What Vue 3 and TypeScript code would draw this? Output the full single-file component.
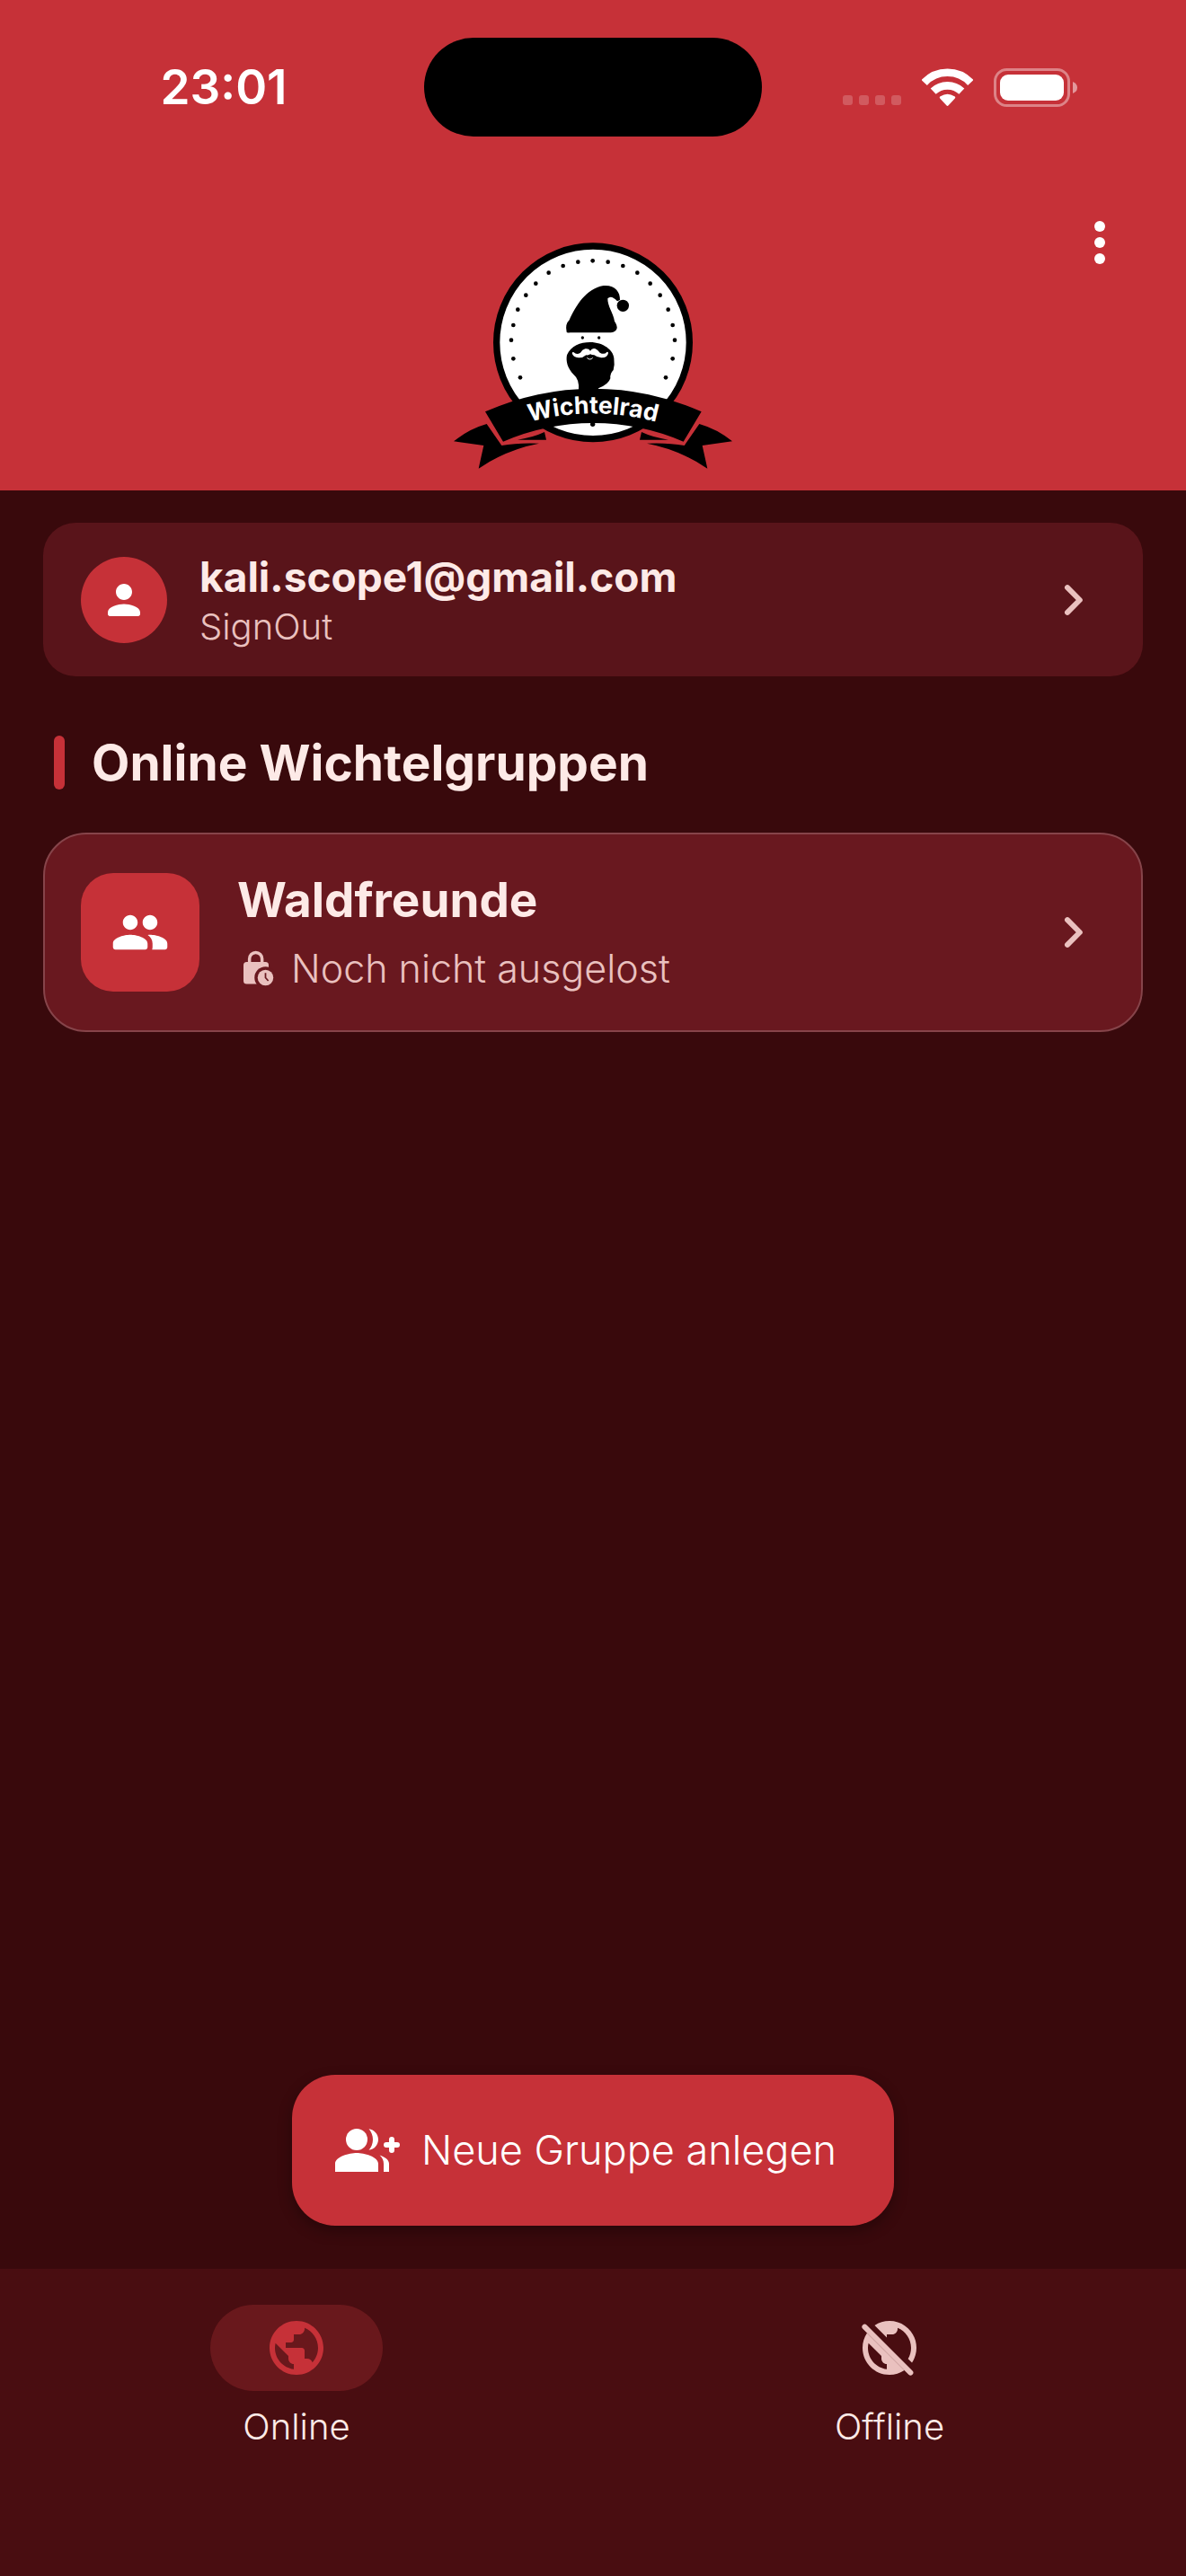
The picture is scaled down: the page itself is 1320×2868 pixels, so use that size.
<script setup lang="ts">
import { ref } from 'vue'

type Tab = 'online' | 'offline'

interface Group {
  id: number
  name: string
  status: string
}

const tab = ref<Tab>('online')
const account = { email: 'kali.scope1@gmail.com', action: 'SignOut' }
const groups: Group[] = [{ id: 1, name: 'Waldfreunde', status: 'Noch nicht ausgelost' }]

// Ring of dots inside the badge, left half; the right half is mirrored around x = 510
const ringDots: [number, number][] = [
  [460, 125], [410, 138], [362, 161], [319, 197], [286, 236],
  [259, 284], [244, 336], [237, 386], [244, 448], [267, 511],
]
</script>

<template>
  <div class="app">
    <header class="header">
      <div class="status">
        <time class="clock">23:01</time>
        <div class="island"></div>
        <div class="signals">
          <svg class="cell" viewBox="0 0 65 11" aria-hidden="true">
            <rect v-for="n in 4" :key="n" :x="(n - 1) * 18" y="0" width="11" height="11" rx="3" />
          </svg>
          <svg class="wifi" viewBox="0 0 171 126" aria-hidden="true">
            <g fill="none" stroke="#fff" stroke-width="26">
              <path d="M8 48A106 106 0 0 1 163 48" />
              <path d="M38 77A69 69 0 0 1 133 77" />
            </g>
            <path fill="#fff" d="M61 101Q57 97 62 94Q85.500 79 109 94Q114 97 110 101L89 124Q85.500 128 82 124Z" />
          </svg>
          <svg class="battery" viewBox="0 0 93 43" aria-hidden="true">
            <rect x="1.500" y="1.500" width="82" height="40" rx="13" fill="none" stroke="#fff" stroke-opacity=".4" stroke-width="3" />
            <rect x="7" y="7" width="71" height="29" rx="9" fill="#fff" />
            <path d="M88 15Q93 17 93 21.500Q93 26 88 28Z" fill="#fff" fill-opacity=".5" />
          </svg>
        </div>
      </div>

      <div class="toolbar">
        <svg class="logo" viewBox="0 0 1020 870" role="img" aria-label="Wichtelrad">
          <defs>
            <path id="banner-line" d="M260 671A800 800 0 0 1 760 671" />
            <g id="ribbon-end">
              <path d="M45 724Q95 683 155 666L205 738Q260 728 330 731Q220 752 128 815L145 738Z" />
              <path d="M348 693L354 719H258Q310 711 348 693Z" />
            </g>
          </defs>
          <circle cx="510" cy="394" r="322" fill="#fff" stroke="#000" stroke-width="22" />
          <g v-for="[x, y] in ringDots" :key="x + '-' + y">
            <circle :cx="x" :cy="y" r="7" />
            <circle :cx="1020 - x" :cy="y" r="7" />
          </g>
          <circle cx="509" cy="121" r="7" />
          <circle cx="509" cy="667" r="8" />
          <path d="M422 359Q416 333 431 319C452 272 486 214 545 204C583 201 601 224 600 252L591 256Q571 234 559 247C558 272 577 294 582 323Q603 354 570 361H434Q422 362 422 359Z" />
          <circle cx="610" cy="271" r="20" />
          <circle cx="475" cy="378" r="5" />
          <circle cx="530" cy="378" r="5" />
          <path d="M500 393C545 393 578 420 580 446Q583 468 578 486Q566 498 568 514Q562 534 528 547V556H462Q466 518 446 502C424 480 419 455 423 436C436 405 468 393 500 393Z" />
          <path fill="#fff" d="M501 422Q506 412 518 415Q526 419 533 428Q548 436 556 426Q560 424 561 429Q559 445 538 445Q524 444 514 436Q506 436 501 433Q496 437 487 436Q476 446 462 445Q443 444 440 429Q442 425 446 427Q455 436 468 428Q474 418 484 415Q496 413 501 422Z" />
          <path fill="none" stroke="#fff" stroke-width="3" d="M490 445Q500 455 509 445" />
          <path d="M150 625A884 884 0 0 1 872 625L812 725A761 761 0 0 0 210 725Z" />
          <use href="#ribbon-end" />
          <use href="#ribbon-end" transform="matrix(-1 0 0 1 1020 0)" />
          <text class="banner-text"><textPath href="#banner-line" startOffset="50%">Wichtelrad</textPath></text>
        </svg>
        <button class="menu" type="button" aria-label="Menü">
          <svg viewBox="0 0 12 48" aria-hidden="true">
            <circle cx="6" cy="6" r="6" />
            <circle cx="6" cy="24" r="6" />
            <circle cx="6" cy="42" r="6" />
          </svg>
        </button>
      </div>
    </header>

    <main class="content">
      <button class="card account" type="button">
        <span class="avatar">
          <svg viewBox="0 0 24 24" aria-hidden="true"><path d="M12 12c2.210 0 4-1.790 4-4s-1.790-4-4-4-4 1.790-4 4 1.790 4 4 4zm0 2c-2.670 0-8 1.340-8 4v1c0 .550.450 1 1 1h14c.550 0 1-.450 1-1v-1c0-2.660-5.330-4-8-4z" /></svg>
        </span>
        <span class="lines">
          <span class="email">{{ account.email }}</span>
          <span class="action">{{ account.action }}</span>
        </span>
        <svg class="chevron" viewBox="0 0 24 24" aria-hidden="true"><path d="M10 7.400L14.600 12L10 16.600" /></svg>
      </button>

      <h1 class="heading">Online Wichtelgruppen</h1>

      <button v-for="group in groups" :key="group.id" class="card group" type="button">
        <span class="tile">
          <svg viewBox="0 0 24 24" aria-hidden="true"><path d="M16 11c1.660 0 2.990-1.340 2.990-3S17.660 5 16 5s-3 1.340-3 3 1.340 3 3 3zm-8 0c1.660 0 2.990-1.340 2.990-3S9.660 5 8 5 5 6.340 5 8s1.340 3 3 3zm0 2c-2.330 0-7 1.170-7 3.500V18c0 .550.450 1 1 1h12c.550 0 1-.450 1-1v-1.500c0-2.330-4.670-3.500-7-3.500zm8 0c-.290 0-.620.020-.970.050.020.010.030.030.040.040 1.140.830 1.930 1.940 1.930 3.410V18c0 .350-.070.690-.180 1H22c.550 0 1-.450 1-1v-1.500c0-2.330-4.670-3.500-7-3.500z" /></svg>
        </span>
        <span class="lines">
          <span class="name">{{ group.name }}</span>
          <span class="state">
            <svg class="lock" viewBox="0 0 24 24" aria-hidden="true">
              <path class="shackle" d="M7.800 9V6a4 4 0 0 1 8 0v3" />
              <rect x="4" y="8" width="16" height="14" rx="2" />
              <circle class="gap" cx="18" cy="18" r="7" />
              <circle cx="18" cy="18" r="5" />
              <path class="hands" d="M18 15v3l1.800 2" />
            </svg>
            {{ group.status }}
          </span>
        </span>
        <svg class="chevron" viewBox="0 0 24 24" aria-hidden="true"><path d="M10 7.400L14.600 12L10 16.600" /></svg>
      </button>

      <button class="create" type="button">
        <svg viewBox="0 0 24 24" aria-hidden="true">
          <circle cx="8" cy="8" r="4" />
          <path d="M8 13c-2.670 0-8 1.340-8 4v3h16v-3c0-2.660-5.330-4-8-4zM12.510 4.050C13.430 5.110 14 6.490 14 8s-.570 2.890-1.490 3.950C14.470 11.700 16 10.040 16 8s-1.530-3.700-3.490-3.950zM16.530 13.830C17.420 14.660 18 15.700 18 17v3h2v-3c0-1.450-1.590-2.510-3.470-3.170z" />
          <path class="plus" d="M21 8v4M19 10h4" />
        </svg>
        Neue Gruppe anlegen
      </button>
    </main>

    <nav class="tabs">
      <button class="tab" :class="{ active: tab === 'online' }" type="button" @click="tab = 'online'">
        <span class="pill">
          <svg viewBox="0 0 24 24" aria-hidden="true"><path d="M12 2C6.480 2 2 6.480 2 12s4.480 10 10 10 10-4.480 10-10S17.520 2 12 2zm-1 17.930c-3.950-.490-7-3.850-7-7.930 0-.620.080-1.210.210-1.790L9 15v1c0 1.100.900 2 2 2v1.930zm6.900-2.540c-.260-.810-1-1.390-1.900-1.390h-1v-3c0-.550-.450-1-1-1H8v-2h2c.550 0 1-.450 1-1V7h2c1.100 0 2-.900 2-2v-.410c2.930 1.190 5 4.060 5 7.410 0 2.080-.800 3.970-2.100 5.390z" /></svg>
        </span>
        Online
      </button>
      <button class="tab" :class="{ active: tab === 'offline' }" type="button" @click="tab = 'offline'">
        <span class="pill">
          <svg viewBox="0 0 24 24" aria-hidden="true">
            <path d="M11 8.170L6.490 3.660C8.070 2.610 9.960 2 12 2c5.520 0 10 4.480 10 10 0 2.040-.610 3.930-1.660 5.510l-1.460-1.460C19.590 14.870 20 13.480 20 12c0-3.350-2.070-6.220-5-7.410V5c0 1.100-.900 2-2 2h-2z" />
            <path fill-rule="evenodd" d="M17.510 20.340C15.930 21.390 14.040 22 12 22 6.480 22 2 17.520 2 12c0-2.040.610-3.930 1.660-5.510zM11 18c-1.100 0-2-.900-2-2v-1l-4.790-4.790C4.080 10.790 4 11.380 4 12c0 4.080 3.050 7.440 7 7.930z" />
            <path class="slash" d="M2.800 4.200L19.800 21.200" />
          </svg>
        </span>
        Offline
      </button>
    </nav>
  </div>
</template>

<style>
body {
  margin: 0;
  background: #39090c;
}
</style>

<style scoped>
.app {
  --red: #c63138;
  --ink: #fdeae7;
  --soft: #eac1bf;
  display: flex;
  flex-direction: column;
  min-height: 100vh;
  background: #39090c;
  color: var(--ink);
  font-family: Inter, "Noto Sans", sans-serif;
}

button {
  margin: 0;
  padding: 0;
  border: 0;
  background: none;
  color: inherit;
  font: inherit;
  text-align: left;
  cursor: pointer;
}

svg {
  display: block;
  flex: none;
}

.header {
  background: var(--red);
}

.status {
  display: grid;
  grid-template-columns: 1fr 376px 1fr;
  align-items: center;
  padding-top: 42px;
}

.clock {
  padding-left: 26px;
  color: #fff;
  font-size: 53px;
  font-weight: 600;
  line-height: 64px;
  text-align: center;
}

.island {
  height: 110px;
  border-radius: 55px;
  background: #000;
}

.signals {
  display: flex;
  align-items: center;
  justify-content: center;
  padding-right: 32px;
}

.cell {
  width: 65px;
  height: 11px;
  margin: 28px 23px 0 0;
  fill: #fff;
  fill-opacity: .2;
}

.wifi {
  width: 57px;
  height: 42px;
  margin-right: 23px;
}

.battery {
  width: 93px;
  height: 43px;
}

.toolbar {
  display: grid;
  grid-template-columns: 1fr 340px 1fr;
  align-items: start;
  padding: 70px 48px 6px;
}

.logo {
  grid-column: 2;
  width: 340px;
  height: 290px;
  margin-top: 28px;
}

.banner-text {
  fill: #fff;
  font-size: 80px;
  font-weight: 700;
  text-anchor: middle;
}

.menu {
  display: grid;
  place-items: center;
  justify-self: end;
  width: 96px;
  height: 96px;
}

.menu svg {
  width: 12px;
  height: 48px;
  fill: #fff;
}

.content {
  display: flex;
  flex: 1;
  flex-direction: column;
  padding: 36px 48px 48px;
}

.card {
  display: flex;
  align-items: center;
  box-sizing: border-box;
  padding: 0 42px;
}

.account {
  min-height: 171px;
  border-radius: 36px;
  background: #59141a;
}

.group {
  min-height: 222px;
  padding: 0 40px;
  border: 2px solid #86444a;
  border-radius: 48px;
  background: #69181f;
}

.avatar,
.tile {
  display: grid;
  flex: none;
  place-items: center;
  background: var(--red);
  fill: #fff;
}

.avatar {
  width: 96px;
  height: 96px;
  margin-right: 36px;
  border-radius: 50%;
}

.avatar svg {
  width: 54px;
  height: 54px;
}

.tile {
  width: 132px;
  height: 132px;
  margin-right: 42px;
  border-radius: 36px;
}

.tile svg {
  width: 66px;
  height: 66px;
}

.lines {
  display: flex;
  flex: 1;
  flex-direction: column;
  min-width: 0;
}

.email {
  font-size: 46px;
  font-weight: 700;
  line-height: 60px;
}

.action {
  color: var(--soft);
  font-size: 40px;
  font-weight: 300;
  line-height: 52px;
}

.name {
  font-size: 53px;
  font-weight: 700;
  line-height: 80px;
}

.state {
  display: flex;
  align-items: center;
  gap: 18px;
  color: var(--soft);
  font-size: 43px;
  font-weight: 300;
  line-height: 72px;
}

.lock {
  width: 42px;
  height: 42px;
  fill: var(--soft);
}

.lock .shackle {
  fill: none;
  stroke: var(--soft);
  stroke-width: 2;
}

.lock .gap {
  fill: #69181f;
}

.lock .hands {
  fill: none;
  stroke: #69181f;
  stroke-width: 1;
}

.chevron {
  width: 72px;
  height: 72px;
  fill: none;
  stroke: var(--soft);
  stroke-width: 2;
  stroke-linecap: round;
  stroke-linejoin: round;
}

.heading {
  display: flex;
  align-items: center;
  gap: 30px;
  margin: 66px 12px 48px;
  font-size: 55px;
  font-weight: 700;
  line-height: 60px;
}

.heading::before {
  width: 12px;
  height: 60px;
  border-radius: 6px;
  background: var(--red);
  content: "";
}

.create {
  display: flex;
  align-items: center;
  align-self: center;
  gap: 24px;
  box-sizing: border-box;
  min-height: 168px;
  margin-top: auto;
  padding: 0 64px 0 48px;
  border-radius: 48px;
  background: var(--red);
  box-shadow: 0 6px 16px rgb(0 0 0 / 30%);
  color: #fff;
  font-size: 45px;
  font-weight: 300;
  line-height: 60px;
}

.create svg {
  width: 72px;
  height: 72px;
  fill: #fff;
}

.create .plus {
  fill: none;
  stroke: #fff;
  stroke-width: 2;
  stroke-linecap: round;
}

.tabs {
  display: grid;
  grid-template-columns: 1fr 1fr;
  padding: 40px 0 138px;
  background: #490d11;
}

.tab {
  display: flex;
  flex-direction: column;
  align-items: center;
  gap: 12px;
  font-size: 40px;
  font-weight: 300;
  line-height: 56px;
}

.pill {
  display: grid;
  place-items: center;
  width: 192px;
  height: 96px;
  border-radius: 48px;
  fill: var(--soft);
}

.pill svg {
  width: 72px;
  height: 72px;
}

.pill .slash {
  stroke: var(--soft);
  stroke-width: 2;
  stroke-linecap: round;
}

.active .pill {
  background: #69181c;
  fill: var(--red);
}
</style>
